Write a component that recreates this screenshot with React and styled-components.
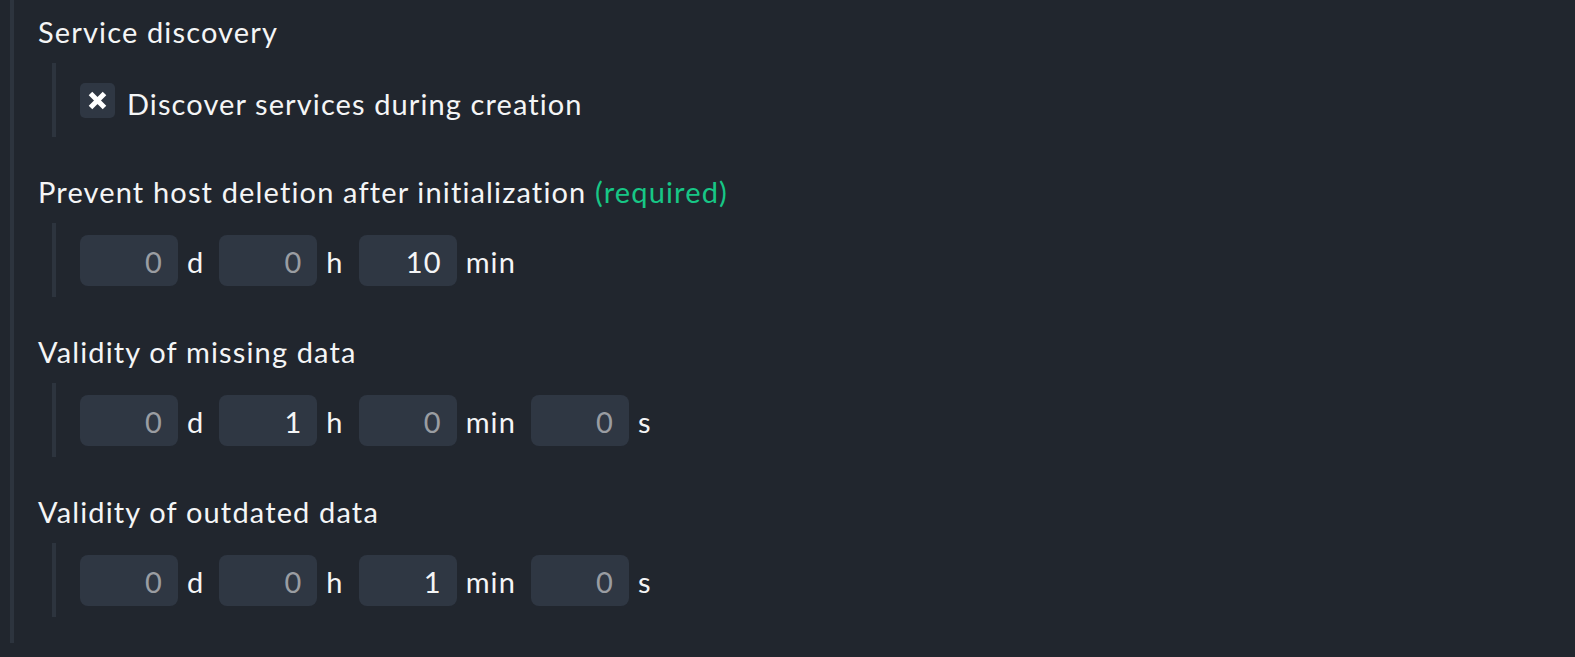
import React from "react";
import styled, { createGlobalStyle } from "styled-components";

const Global = createGlobalStyle`
  html, body {
    margin: 0;
    padding: 0;
    background: #21262e;
  }
  body {
    font-family: Lato, "Open Sans", sans-serif;
    color: #f4f5f6;
    -webkit-font-smoothing: antialiased;
  }
`;

const Page = styled.div`
  width: 1575px;
  height: 657px;
  background: #21262e;
  box-sizing: border-box;
  padding-left: 10px;
`;

const Panel = styled.div`
  border-left: 4px solid #2d343e;
  padding: 14px 0 26px 24px;
`;

const Section = styled.div`
  margin-bottom: 37px;
  &:last-child {
    margin-bottom: 0;
  }
`;

const Title = styled.div`
  font-size: 29px;
  line-height: 36px;
  letter-spacing: 1.15px;
  margin-bottom: 13px;
  white-space: nowrap;
`;

const Required = styled.span`
  color: #17c786;
`;

const Indent = styled.div`
  margin-left: 14px;
  border-left: 4px solid #2d343e;
  padding: 12px 0 11px 24px;
`;

const Row = styled.div`
  display: flex;
  align-items: center;
  height: 51px;
`;

const CheckBox = styled.span`
  width: 35px;
  height: 35px;
  border-radius: 5px;
  background: #2f3743;
  display: flex;
  align-items: center;
  justify-content: center;
  flex-shrink: 0;
`;

const CheckLabel = styled.span`
  margin-left: 12px;
  padding-top: 5px;
  font-size: 29px;
  letter-spacing: 1.1px;
`;

const Unit = styled.span`
  display: flex;
  align-items: center;
  margin-right: 15px;
`;

const NumberBox = styled.input`
  width: 98px;
  height: 51px;
  box-sizing: border-box;
  border: none;
  outline: none;
  border-radius: 8px;
  background: #2f3743;
  padding: 2px 15px 0 0;
  text-align: right;
  font-family: Lato, "Open Sans", sans-serif;
  font-size: 29px;
  letter-spacing: 1.1px;
  color: ${(p) => (p.$zero ? "#9a9da2" : "#f4f5f6")};
`;

const UnitLabel = styled.span`
  margin-left: 9px;
  padding-top: 2px;
  font-size: 29px;
  letter-spacing: 1.1px;
`;

const XMark = () => (
  <svg width="21" height="21" viewBox="0 0 21 21">
    <path d="M3.5 3.5 L17.5 17.5 M17.5 3.5 L3.5 17.5" stroke="#ffffff" strokeWidth="5" strokeLinecap="butt" />
  </svg>
);

const Duration = ({ values }) => (
  <Row>
    {values.map(([v, u]) => (
      <Unit key={u}>
        <NumberBox readOnly value={v} $zero={v === "0"} />
        <UnitLabel>{u}</UnitLabel>
      </Unit>
    ))}
  </Row>
);

export default function App() {
  return (
    <Page>
      <Global />
      <Panel>
        <Section>
          <Title>Service discovery</Title>
          <Indent>
            <Row>
              <CheckBox>
                <XMark />
              </CheckBox>
              <CheckLabel>Discover services during creation</CheckLabel>
            </Row>
          </Indent>
        </Section>
        <Section>
          <Title>
            Prevent host deletion after initialization <Required>(required)</Required>
          </Title>
          <Indent>
            <Duration values={[["0", "d"], ["0", "h"], ["10", "min"]]} />
          </Indent>
        </Section>
        <Section>
          <Title>Validity of missing data</Title>
          <Indent>
            <Duration values={[["0", "d"], ["1", "h"], ["0", "min"], ["0", "s"]]} />
          </Indent>
        </Section>
        <Section>
          <Title>Validity of outdated data</Title>
          <Indent>
            <Duration values={[["0", "d"], ["0", "h"], ["1", "min"], ["0", "s"]]} />
          </Indent>
        </Section>
      </Panel>
    </Page>
  );
}
